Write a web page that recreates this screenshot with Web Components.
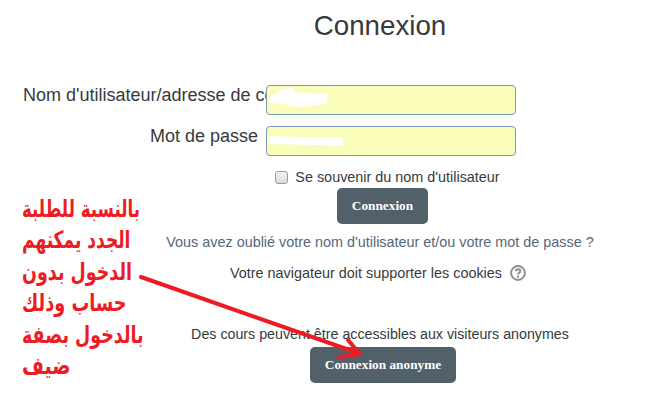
<!DOCTYPE html>
<html lang="fr"><head><meta charset="utf-8"><title>Connexion</title>
<style>html,body{margin:0;padding:0;background:#fff}body{width:645px;height:407px;overflow:hidden;font-family:"Liberation Sans",Arial,sans-serif;color:#373a3c}</style>
</head><body>
<login-page>
  <page-title slot="title">Connexion</page-title>
  <form-row slot="rows" top="0" blur="user">Nom d'utilisateur/adresse de courriel</form-row>
  <form-row slot="rows" top="11" blur="pass" align="right">Mot de passe</form-row>
  <remember-check slot="rows">Se souvenir du nom d'utilisateur</remember-check>
  <app-button slot="rows" top="2" shift="5">Connexion</app-button>
  <info-line slot="rows" top="9" tone="#55677a">Vous avez oublié votre nom d'utilisateur et/ou votre mot de passe ?</info-line>
  <info-line slot="rows" top="13" shift="-4">Votre navigateur doit supporter les cookies <help-icon></help-icon></info-line>
  <info-line slot="rows" top="43" size="14.25">Des cours peuvent être accessibles aux visiteurs anonymes</info-line>
  <app-button slot="rows" top="4" shift="6">Connexion anonyme</app-button>
  <arabic-note slot="over">
    <span>بالنسبة للطلبة</span><span>الجدد يمكنهم</span><span>الدخول بدون</span><span>حساب وذلك</span><span>بالدخول بصفة</span><span>ضيف</span>
  </arabic-note>
  <arrow-mark slot="over"></arrow-mark>
</login-page>
<script>
const def=(name,css,html,init)=>customElements.define(name,class extends HTMLElement{
  connectedCallback(){ if(this.shadowRoot)return; const r=this.attachShadow({mode:'open'}); r.innerHTML=`<style>${css}</style>${html}`; init&&init(this,r);} });
def('login-page',`:host{display:block;position:relative;width:645px;height:407px}
 main{display:flex;flex-direction:column;align-items:center;padding-left:115px;width:530px}
 .rows{display:flex;flex-direction:column;align-items:center;align-self:stretch}`,
 `<main><slot name="title"></slot><div class="rows"><slot name="rows"></slot></div></main><slot name="over"></slot>`);
def('page-title',`:host{display:block;font-size:27.7px;line-height:34px;padding-top:9px;margin-bottom:42px;color:#373a3c}`,`<slot></slot>`);
def('form-row',`:host{display:grid;grid-template-columns:243px 250px;align-self:flex-start;margin-left:-92px;width:493px;font-size:18px;line-height:30px}
 label{display:block;white-space:nowrap;overflow:hidden;height:30px;line-height:30px;margin-top:-5px;box-sizing:border-box;width:243px}
 :host([align=right]) label{text-align:right;padding-right:8px}
 .box{position:relative;grid-column:2;box-sizing:border-box;width:250px;height:30px;background:#fafdba;border:1px solid #7c9ab8;border-radius:4px}
 svg{position:absolute;left:0;top:0}`,
 `<label><slot></slot></label><div class="box"></div>`,(h,r)=>{
  h.style.marginTop=(h.getAttribute('top')||0)+'px';
  r.querySelector('.box').innerHTML=h.getAttribute('blur')==='user'
   ?'<svg width="80" height="28" fill="#fff"><path d="M3 10 L10 7 L14 3 L26 2 L30 7 L60 8 L60 17 L45 20 L30 21 L15 18 L3 17 Z"/></svg>'
   :'<svg width="80" height="28" fill="#fff"><path d="M3 9 L30 10 L76 10 L76 19 L50 18 L3 17 Z"/></svg>';
 });
def('remember-check',`:host{display:flex;align-items:center;margin-top:12px;font-size:14.4px;line-height:18px;height:18px;gap:7px;margin-left:15px;color:#373a3c}
 i{display:block;box-sizing:border-box;width:13px;height:13px;border:1px solid #9a9a9a;border-radius:3px;background:linear-gradient(#f2f2f2,#dcdcdc)}`,
 `<i></i><span><slot></slot></span>`);
def('app-button',`:host{display:block;box-sizing:border-box;height:36px;padding:0 15px;background:#526069;color:#fff;border-radius:5px;font:bold 13.3px/35px "Liberation Serif",serif;text-align:center;white-space:nowrap}`,
 `<slot></slot>`,(h)=>{h.style.marginTop=h.getAttribute('top')+'px';h.style.marginLeft=h.getAttribute('shift')+'px'});
def('info-line',`:host{display:block;font-size:14.4px;line-height:18px;white-space:nowrap;color:#373a3c}`,`<slot></slot>`,(h)=>{
 h.style.marginTop=(h.getAttribute('top')||0)+'px';
 if(h.getAttribute('tone'))h.style.color=h.getAttribute('tone');
 if(h.getAttribute('shift'))h.style.marginLeft=h.getAttribute('shift')+'px';
 if(h.getAttribute('size'))h.style.fontSize=h.getAttribute('size')+'px';});
def('help-icon',`:host{display:inline-block;width:16px;height:16px;margin-left:4px;vertical-align:-3px}svg{display:block}`,
 `<svg width="16" height="16" viewBox="0 0 16 16" fill="none"><circle cx="8" cy="8" r="6.9" stroke="#8f8f8f" stroke-width="2"/><path d="M5.7 6.3C5.8 4.9 6.8 4.2 8 4.2c1.3 0 2.3.8 2.3 1.9 0 1-.6 1.4-1.2 1.8-.6.4-1 .8-1 1.5" stroke="#8f8f8f" stroke-width="2"/><rect x="7" y="10.6" width="2" height="2" fill="#8f8f8f"/></svg>`);
def('arabic-note',`:host{position:absolute;left:22px;top:194px;display:flex;flex-direction:column;align-items:flex-start;color:#ed1c24;font:bold 24px/31.4px "DejaVu Sans Condensed","DejaVu Sans",sans-serif;font-stretch:condensed}
 ::slotted(span){display:block;direction:rtl;white-space:nowrap;transform-origin:left center}
 ::slotted(span:nth-child(1)){transform:scaleX(.77)}
 ::slotted(span:nth-child(2)){transform:scaleX(.79)}
 ::slotted(span:nth-child(3)){transform:scaleX(.81)}
 ::slotted(span:nth-child(4)){transform:scaleX(.82)}
 ::slotted(span:nth-child(5)){transform:scaleX(.81)}
 ::slotted(span:nth-child(6)){transform:scaleX(.875)}`,`<slot></slot>`);
def('arrow-mark',`:host{position:absolute;left:0;top:0;width:645px;height:407px;pointer-events:none}`,
 `<svg width="645" height="407" fill="none" stroke="#ed1c24" stroke-linecap="round" stroke-linejoin="round"><path d="M141 277 L358 353" stroke-width="4"/><path d="M348 340 L360 354 L339 357" stroke-width="4"/></svg>`);
</script>
</body></html>
